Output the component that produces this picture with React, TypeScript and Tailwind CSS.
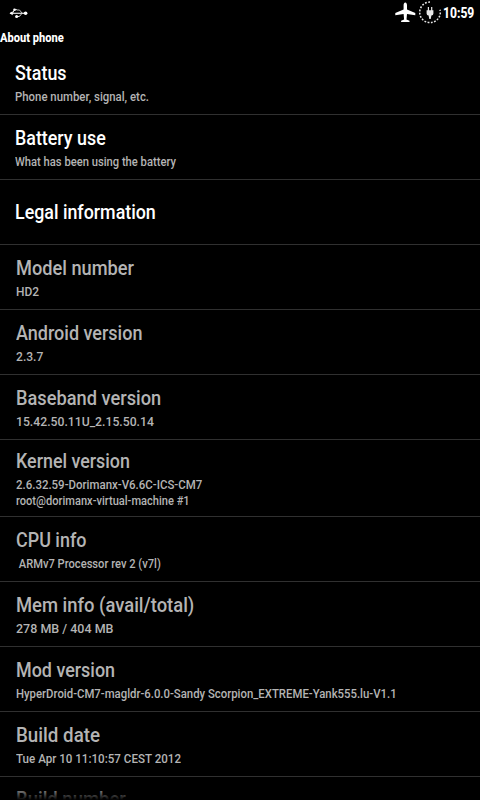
import { useLayoutEffect, useRef, useState } from "react";
import { clsx } from "clsx";

type TextLine = { text: string; width: number };

type Preference = {
  title: TextLine;
  summary?: TextLine[];
  enabled?: boolean;
};

const PREFERENCES: Preference[] = [
  {
    title: { text: "Status", width: 52 },
    summary: [{ text: "Phone number, signal, etc.", width: 134 }],
    enabled: true,
  },
  {
    title: { text: "Battery use", width: 91 },
    summary: [{ text: "What has been using the battery", width: 161 }],
    enabled: true,
  },
  { title: { text: "Legal information", width: 141 }, enabled: true },
  {
    title: { text: "Model number", width: 118 },
    summary: [{ text: "HD2", width: 23 }],
  },
  {
    title: { text: "Android version", width: 126 },
    summary: [{ text: "2.3.7", width: 27 }],
  },
  {
    title: { text: "Baseband version", width: 145 },
    summary: [{ text: "15.42.50.11U_2.15.50.14", width: 138 }],
  },
  {
    title: { text: "Kernel version", width: 114 },
    summary: [
      { text: "2.6.32.59-Dorimanx-V6.6C-ICS-CM7", width: 186 },
      { text: "root@dorimanx-virtual-machine #1", width: 174 },
    ],
  },
  {
    title: { text: "CPU info", width: 70 },
    summary: [{ text: " ARMv7 Processor rev 2 (v7l)", width: 145 }],
  },
  {
    title: { text: "Mem info (avail/total)", width: 178 },
    summary: [{ text: "278 MB / 404 MB", width: 97 }],
  },
  {
    title: { text: "Mod version", width: 99 },
    summary: [
      {
        text: "HyperDroid-CM7-magldr-6.0.0-Sandy Scorpion_EXTREME-Yank555.lu-V1.1",
        width: 381,
      },
    ],
  },
  {
    title: { text: "Build date", width: 84 },
    summary: [{ text: "Tue Apr 10 11:10:57 CEST 2012", width: 165 }],
  },
];

// Squeezes a line horizontally so that it takes exactly `width` pixels
function CondensedText({ text, width }: TextLine) {
  const ref = useRef<HTMLSpanElement>(null);
  const [scale, setScale] = useState(1);

  useLayoutEffect(() => {
    if (ref.current) {
      setScale(width / ref.current.offsetWidth);
    }
  }, [text, width]);

  return (
    <span className="block" style={{ width }}>
      <span
        ref={ref}
        className="inline-block origin-left whitespace-pre"
        style={{ transform: `scaleX(${scale})` }}
      >
        {text}
      </span>
    </span>
  );
}

function UsbIcon() {
  return (
    <svg className="h-3 w-5" viewBox="0 0 20 12" fill="none" stroke="#e4e4e4">
      <path d="M1 6.3h16" strokeWidth="1.2" />
      <path d="M3.5 6.3l2-3.6H8M7 9.6h2c2 0 2.2-1 3.8-3.2" />
      <path d="M0.5 6.3l3.2-2v4z" fill="#fff" stroke="none" />
      <path d="M8 3h2.5l2.5 3" strokeWidth="0.8" />
      <circle cx="5.5" cy="2.8" r="1.3" fill="#fff" stroke="none" />
      <circle cx="7.6" cy="9.6" r="1.5" fill="#fff" stroke="none" />
      <circle cx="16.6" cy="6.3" r="1.8" fill="#fff" stroke="none" />
    </svg>
  );
}

function AirplaneIcon() {
  return (
    <svg className="h-[25px] w-6" viewBox="0 0 24 25" fill="#fff">
      <path d="M11.3 2.6c-1.2 0-1.7 1.4-1.7 2.8v4.2L1.3 13v2.3l8.3-1.3.5 5.5-3 1.2v1.4h8.4v-1.4l-3-1.2.5-5.5 8.3 1.3V13L13 9.6V5.4c0-1.4-.5-2.8-1.7-2.8z" />
    </svg>
  );
}

function ChargingIcon() {
  return (
    <svg className="h-[25px] w-6" viewBox="0 0 24 25" fill="none">
      <path
        d="M12 2A10.3 10.3 0 1 0 22 9.8"
        stroke="#e6e6e6"
        strokeWidth="1.5"
        strokeDasharray="1.8 1.5"
      />
      <path
        d="M8.6 10.2h6.8v3.2q0 2-2 2.2l-.7 3.4h-1.4l-.7-3.4q-2-.2-2-2.2z"
        fill="#e8e8e8"
      />
      <path d="M10.4 7v4M13.7 7v4" stroke="#e8e8e8" strokeWidth="1.2" />
    </svg>
  );
}

function StatusBar() {
  return (
    <header className="flex h-[25px] items-center justify-between pr-1.5 pl-[9px] text-white">
      <UsbIcon />
      <div className="flex items-center">
        <AirplaneIcon />
        <ChargingIcon />
        <div className="ml-px pt-px text-[14px] leading-[25px] font-extrabold">
          <CondensedText text="10:59" width={31} />
        </div>
      </div>
    </header>
  );
}

function PreferenceRow({ title, summary, enabled }: Preference) {
  return (
    <li
      className={clsx(
        "flex shrink-0 flex-col justify-center gap-0.5 border-b border-[#303030] pt-px",
        enabled ? "pl-[15px]" : "pl-4",
        summary && summary.length > 1 ? "h-[77px]" : "h-[65px]"
      )}
    >
      <div
        className={clsx(
          "text-[21px] leading-[27px] font-medium",
          enabled ? "text-white" : "text-[#b4b4b4]"
        )}
      >
        <CondensedText {...title} />
      </div>
      {summary && (
        <div className="text-[13px] leading-4 font-medium text-[#b4b4b4]">
          {summary.map((line) => (
            <CondensedText key={line.text} {...line} />
          ))}
        </div>
      )}
    </li>
  );
}

export default function App() {
  return (
    <div className="relative flex h-[800px] w-[480px] flex-col overflow-hidden bg-black font-['Roboto',sans-serif]">
      <StatusBar />
      <h1 className="h-[25px] text-[13.5px] leading-[25px] font-extrabold text-white">
        <CondensedText text="About phone" width={64} />
      </h1>
      <ul className="flex min-h-0 flex-1 flex-col">
        {PREFERENCES.map((item) => (
          <PreferenceRow key={item.title.text} {...item} />
        ))}
        {/* last row, scrolled halfway under the bottom edge */}
        <li className="h-[23px] shrink-0 overflow-hidden pt-[9px] pl-4 text-[21px] leading-[27px] font-medium text-[#b4b4b4]">
          <CondensedText text="Build number" width={110} />
        </li>
      </ul>
      <div className="absolute inset-x-0 bottom-0 h-3.5 bg-linear-to-t from-black to-transparent" />
    </div>
  );
}
